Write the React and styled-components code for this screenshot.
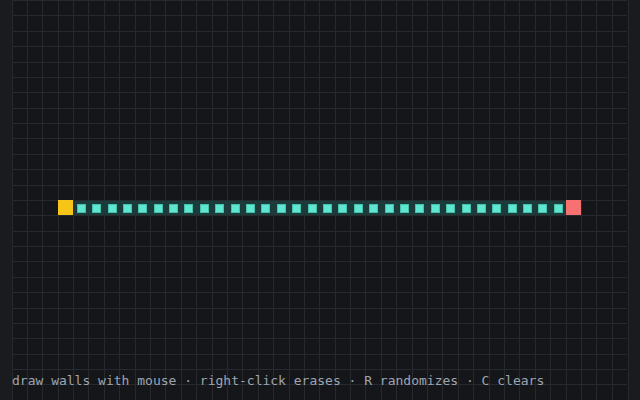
import React from "react";
import styled, { createGlobalStyle, css } from "styled-components";

const COLS = 40;
const ROWS = 26;
const PATH_ROW = 13;
const START_COL = 3;
const END_COL = 36;

const LINE = "#262a2f";

const Global = createGlobalStyle`
  html, body { margin: 0; padding: 0; background: #1a1b1f; }
  body { width: 640px; height: 400px; overflow: hidden; }
`;

const Page = styled.div`
  position: relative;
  width: 640px;
  height: 400px;
  display: flex;
  justify-content: center;
  background: #1a1b1f;
`;

const Board = styled.div`
  display: grid;
  grid-template-columns: repeat(${COLS}, 15.4px);
  grid-template-rows: repeat(${ROWS}, 15.385px);
  width: 616px;
  height: 400px;
  border-right: 1px solid ${LINE};
  background: #15161a;
`;

const kinds = {
  empty: css`
    background: #15161a;
    border-left-color: ${LINE};
  `,
  start: css`
    background: #f5c518;
    border-left-color: #f5c518;
    border-top-color: #f5c518;
  `,
  end: css`
    background: #f87171;
    border-left-color: #f87171;
    border-top-color: #f87171;
  `,
  path: css`
    background: #1c3a3a;
    border-left-color: #1c3a3a;
  `,
};

const Cell = styled.div`
  box-sizing: border-box;
  border-top: 1px solid ${LINE};
  border-left: 1px solid ${LINE};
  display: flex;
  align-items: center;
  justify-content: center;
  ${(p) => kinds[p.$kind]}
`;

const Dot = styled.span`
  width: 9px;
  height: 9px;
  box-sizing: border-box;
  background: #5ee6d0;
  border: 1px solid #45bfae;
`;

const Hint = styled.div`
  position: absolute;
  left: 12px;
  bottom: 11px;
  font-family: "DejaVu Sans Mono", "Liberation Mono", monospace;
  font-size: 13px;
  line-height: 16px;
  color: #9ea5b0;
  white-space: pre;
`;

function kindOf(r, c) {
  if (r !== PATH_ROW) return "empty";
  if (c === START_COL) return "start";
  if (c === END_COL) return "end";
  if (c > START_COL && c < END_COL) return "path";
  return "empty";
}

export default function App() {
  const cells = [];
  for (let r = 0; r < ROWS; r++) {
    for (let c = 0; c < COLS; c++) {
      const k = kindOf(r, c);
      cells.push(
        <Cell key={`${r}-${c}`} $kind={k}>
          {k === "path" && <Dot />}
        </Cell>
      );
    }
  }
  return (
    <>
      <Global />
      <Page>
        <Board>{cells}</Board>
        <Hint>draw walls with mouse · right-click erases · R randomizes · C clears</Hint>
      </Page>
    </>
  );
}
